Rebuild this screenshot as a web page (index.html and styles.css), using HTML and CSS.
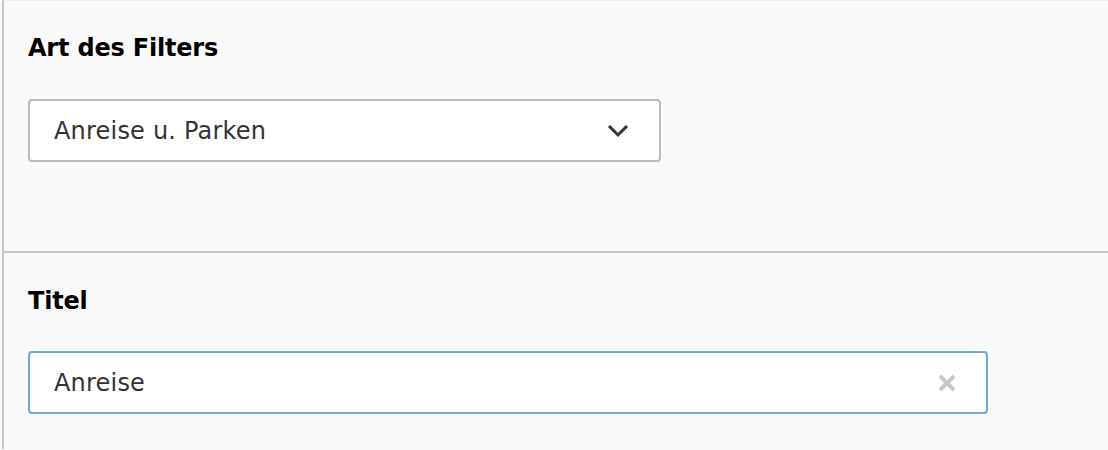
FILE: index.html
```html
<!DOCTYPE html>
<html lang="de">
    <head>
        <meta charset="UTF-8">
        <meta name="viewport" content="width=device-width, initial-scale=1.0">
        <title>Filter</title>
        <link rel="stylesheet" href="styles.css">
    </head>
<body>
    <div class="panel">
        <div class="field first">
            <label class="field-label" for="filterart">Art des Filters</label>
            <div class="select-box">
                <span class="select-value">Anreise u. Parken</span>
                <svg class="chevron" width="22" height="14" viewBox="0 0 22 14">
                    <path d="M2 2 L11 11 L20 2" fill="none" stroke="#333" stroke-width="3"/>
                </svg>
            </div>
        </div>

        <div class="field">
            <label class="field-label" for="titel">Titel</label>
            <div class="input-box">
                <input type="text" id="titel" class="text-input" value="Anreise">
                <svg class="clear" width="18" height="18" viewBox="0 0 18 18">
                    <path d="M2 2 L16 16 M16 2 L2 16" stroke="#c8c8c8" stroke-width="4"/>
                </svg>
            </div>
        </div>
    </div>
</body>
</html>
```

FILE: styles.css
```css
body {
    margin: 0;
    background-color: #fafafa;
    font-family: 'DejaVu Sans', Verdana, sans-serif;
    font-size: 24px;
    color: #333333;
}

.panel {
    margin-left: 2px;
    border-left: 2px solid #c6c6c6;
    border-top: 1px solid #ededed;
    height: 449px;
    box-sizing: border-box;
}

.field {
    padding: 33px 24px 0 24px;
}

.field.first {
    padding-top: 32px;
    padding-bottom: 89px;
    border-bottom: 2px solid #c6c6c6;
}

.field-label {
    display: block;
    font-weight: bold;
    color: #000000;
    line-height: 30px;
    letter-spacing: -0.2px;
    margin-bottom: 35px;
}

.field.first .field-label {
    padding-top: 1px;
    line-height: 29px;
    margin-bottom: 36px;
}

.select-box {
    width: 633px;
    height: 63px;
    box-sizing: border-box;
    border: 2px solid #bbbbbb;
    border-radius: 4px;
    background-color: #ffffff;
    display: flex;
    align-items: center;
    justify-content: space-between;
    padding: 0 30px 0 24px;
}

.select-value {
    letter-spacing: 0.2px;
}

.input-box {
    width: 960px;
    height: 63px;
    box-sizing: border-box;
    border: 2px solid #6ea8dd;
    border-radius: 4px;
    background-color: #ffffff;
    display: flex;
    align-items: center;
    padding: 0 30px 0 24px;
}

.text-input {
    flex: 1;
    border: none;
    outline: none;
    padding: 0;
    font-family: inherit;
    font-size: 24px;
    letter-spacing: 0.2px;
    color: #333333;
    background: transparent;
}
```
